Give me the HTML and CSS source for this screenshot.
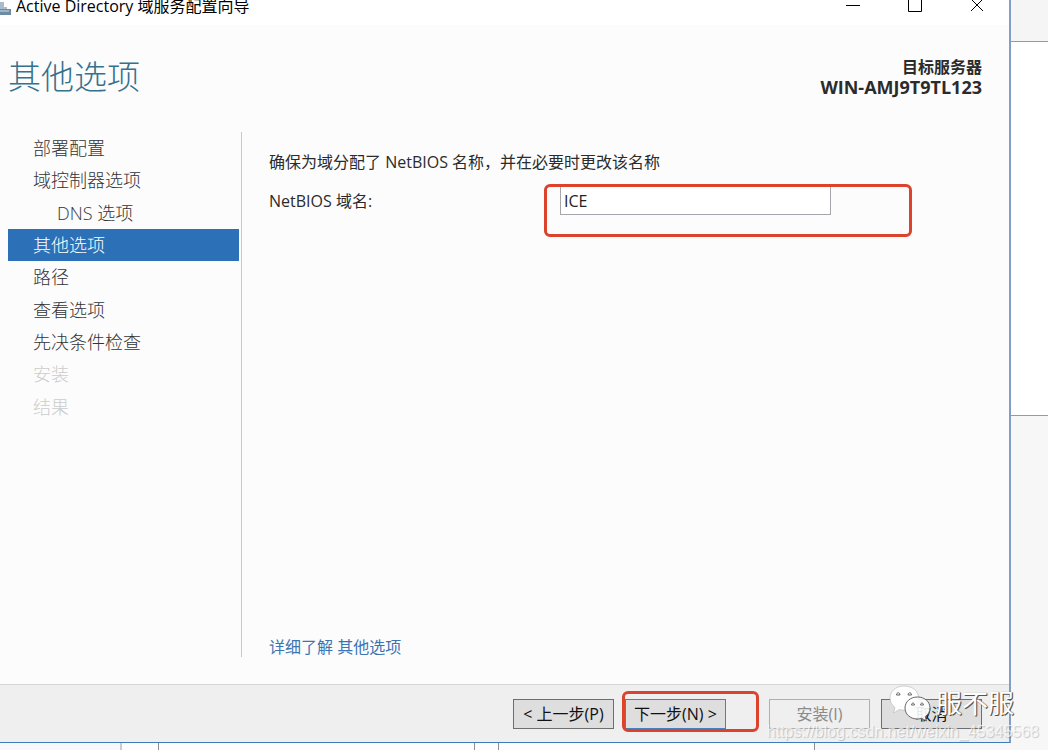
FILE: index.html
```html
<!DOCTYPE html>
<html lang="zh-CN">
<head>
    <meta charset="UTF-8">
    <meta name="viewport" content="width=device-width, initial-scale=1.0">
    <title>Active Directory 域服务配置向导</title>
    <link rel="stylesheet" href="styles.css">
</head>
<body>
    <div class="desktop">
        <main class="window">
            <header class="titlebar">
                <svg class="app-icon" width="12" height="18" viewBox="0 0 12 18">
                    <path d="M0 2h4v5h3v3H0z" fill="#a9bccb"/>
                    <path d="M0 9h11v6H0z" fill="#6d8ba3"/>
                    <path d="M0 11h9" stroke="#d5e0e8"/>
                </svg>
                <span class="title">Active Directory 域服务配置向导</span>
                <div class="controls">
                    <button class="control" aria-label="最小化"><svg width="16" height="16" viewBox="0 0 16 16"><path d="M1 8.500h14"/></svg></button>
                    <button class="control" aria-label="最大化"><svg width="16" height="16" viewBox="0 0 16 16"><path d="M1.500 1.500h13v13h-13z"/></svg></button>
                    <button class="control" aria-label="关闭"><svg width="16" height="16" viewBox="0 0 16 16"><path d="M2 2l12 12M14 2L2 14"/></svg></button>
                </div>
            </header>

            <div class="heading">
                <h1>其他选项</h1>
                <div class="server">目标服务器<br><span class="host">WIN-AMJ9T9TL123</span></div>
            </div>

            <div class="content">
                <nav class="sidebar">
                    <ul class="steps">
                        <li class="step">部署配置</li>
                        <li class="step">域控制器选项</li>
                        <li class="step step-sub">DNS 选项</li>
                        <li class="step step-active">其他选项</li>
                        <li class="step">路径</li>
                        <li class="step">查看选项</li>
                        <li class="step">先决条件检查</li>
                        <li class="step step-disabled">安装</li>
                        <li class="step step-disabled">结果</li>
                    </ul>
                </nav>
                <section class="panel">
                    <p class="hint">确保为域分配了 NetBIOS 名称，并在必要时更改该名称</p>
                    <div class="field">
                        <label for="netbios">NetBIOS 域名:</label>
                        <div class="field-box">
                            <input type="text" id="netbios" class="field-input" value="ICE">
                            <span class="mark mark-field"></span>
                        </div>
                    </div>
                    <a class="more" href="#">详细了解 其他选项</a>
                </section>
            </div>

            <footer class="footer">
                <button class="btn">&lt; 上一步(P)</button>
                <div class="next-box">
                    <button class="btn btn-primary">下一步(N) &gt;</button>
                    <span class="mark mark-next"></span>
                </div>
                <button class="btn btn-install" disabled>安装(I)</button>
                <button class="btn btn-cancel">取消</button>
            </footer>
        </main>

        <aside class="behind-right">
            <div class="behind-top"></div>
            <div class="behind-middle"></div>
        </aside>

        <div class="behind-bottom">
            <span class="cell cell-a"></span>
            <span class="cell cell-b"></span>
            <span class="cell cell-c"></span>
            <span class="cell cell-d"></span>
            <span class="cell cell-e"></span>
        </div>

        <div class="brand">
            <svg width="44" height="38" viewBox="0 0 44 38">
                <path d="M16 2C7.500 2 2 7.500 2 14c0 4 2 7.300 5 9.500L5.500 29l6-3.500c1.500.5 3 .7 4.500.7 9 0 14.500-5.500 14.500-12.200S25 2 16 2z" fill="#fff" stroke="#bbb" stroke-width=".7"/>
                <path d="M29.500 13C22 13 17 18 17 24s5 11 12.500 11c1.500 0 3-.2 4.200-.6L38.500 37l-1.300-4.400c3-2 4.800-5 4.800-8.600C42 18 37 13 29.500 13z" fill="#fff" fill-opacity=".9" stroke="#666"/>
                <g fill="#fff" stroke="#555" stroke-width=".9">
                    <path d="M8.500 11c0-3 3.500-3 3.500 0zM20 11c0-3 3.500-3 3.500 0z"/>
                    <path d="M23.500 21c0-2.600 3-2.600 3 0zM32.500 21c0-2.600 3-2.600 3 0z"/>
                </g>
            </svg>
            <span>服不服</span>
        </div>
        <div class="blog-url">https://blog.csdn.net/weixin_45345568</div>
    </div>
</body>
</html>
```

FILE: styles.css
```css
* {
    box-sizing: border-box;
}
body {
    margin: 0;
    font-family: "Open Sans", "Noto Sans CJK SC", sans-serif;
    font-size: 16px;
    line-height: 20px;
    color: #2b2b2b;
    background-color: #f7f7f7;
}
button, input {
    font: inherit;
}
.desktop {
    position: relative;
    display: grid;
    grid-template-columns: 1fr 37px;
    grid-template-rows: 1fr 7px;
    height: 100vh;
    overflow: hidden;
}
.window {
    display: flex;
    flex-direction: column;
    background-color: #fcfcfc;
    border-right: 2px solid #7f9fc6;
    border-bottom: 1px solid #3f79bd;
}

/* title bar */
.titlebar {
    display: flex;
    align-items: flex-start;
    height: 25px;
    background-color: #fff;
    color: #000;
}
.app-icon {
    margin-right: 4px;
}
.title {
    flex: 1;
    margin-top: -4px;
}
.controls {
    display: flex;
    gap: 46px;
    margin: -3px 24px 0 0;
}
.control {
    width: 16px;
    height: 16px;
    padding: 0;
    border: none;
    background: none;
}
.control svg {
    display: block;
    fill: none;
    stroke: #000;
    stroke-width: 1;
}

/* heading */
.heading {
    display: flex;
    justify-content: space-between;
    height: 107px;
    padding: 32px 27px 0 8px;
}
h1 {
    margin: 0;
    font-size: 33px;
    line-height: 40px;
    font-weight: 300;
    color: #34728f;
}
.server {
    font-weight: bold;
    text-align: right;
}
.host {
    font-size: 18px;
}

/* steps and panel */
.content {
    display: flex;
    flex: 1;
}
.sidebar {
    width: 242px;
    margin-bottom: 27px;
    padding: 0 2px 0 8px;
    border-right: 1px solid #c8c8c8;
}
.steps {
    display: flex;
    flex-direction: column;
    height: 291px;
    margin: 0;
    padding: 0;
    list-style: none;
    font-size: 18px;
    font-weight: 300;
    color: #333;
}
.step {
    display: flex;
    flex: 1;
    align-items: center;
    padding-left: 25px;
}
.step-sub {
    padding-left: 49px;
}
.step-active {
    background-color: #2c71b8;
    color: #fff;
}
.step-disabled {
    color: #ccc;
}
.panel {
    display: flex;
    flex: 1;
    flex-direction: column;
    align-items: flex-start;
    padding: 20px 27px 27px;
}
.hint {
    margin: 0 0 14px;
}
.field {
    display: flex;
    align-items: center;
}
.field label {
    width: 291px;
}
.field-box, .next-box {
    position: relative;
}
.field-input {
    display: block;
    width: 271px;
    height: 29px;
    padding: 0 3px;
    border: 1px solid #a5a7ac;
    border-radius: 0;
    background-color: #fff;
    color: #222;
}
.more {
    margin-top: auto;
    color: #3a74b4;
    text-decoration: none;
}

/* red marks drawn over the controls */
.mark {
    position: absolute;
    border: 3px solid #dc432c;
    border-radius: 6px;
    pointer-events: none;
}
.mark-field {
    top: -2px;
    left: -16px;
    width: 368px;
    height: 53px;
}
.mark-next {
    top: -8px;
    left: -3px;
    width: 137px;
    height: 41px;
}

/* buttons */
.footer {
    display: flex;
    justify-content: flex-end;
    align-items: flex-start;
    gap: 11px;
    height: 58px;
    padding: 14px 27px 0;
    border-top: 1px solid #d6d6d6;
    background-color: #efefef;
}
.btn {
    display: block;
    width: 101px;
    height: 30px;
    padding: 0;
    border: 1px solid #6e6e6e;
    border-radius: 0;
    background-color: #dedede;
    color: #111;
    white-space: nowrap;
}
.btn-primary {
    border-color: #4a7fc0;
}
.btn-install {
    margin-left: 32px;
    border-color: #b0b0b0;
    background-color: #efefef;
    color: #8a8a8a;
}

/* windows behind the wizard */
.behind-right {
    grid-row: span 2;
    background-color: #f7f7f7;
}
.behind-top {
    height: 41px;
    background-color: #f5f5f5;
}
.behind-middle {
    height: 375px;
    border-top: 1px solid #999;
    border-bottom: 1px solid #999;
    background-color: #fff;
}
.behind-bottom {
    display: flex;
}
.cell {
    border-right: 1px solid #8e8e8e;
    background-color: #fdfdfd;
}
.cell-a {
    width: 122px;
    border-right: 2px solid #ccc;
    background-color: #f8f8f8;
}
.cell-b {
    width: 37px;
}
.cell-c {
    width: 316px;
}
.cell-d {
    width: 24px;
}
.cell-e {
    width: 316px;
}

/* watermarks */
.brand {
    position: absolute;
    right: 34px;
    bottom: 28px;
    display: flex;
    align-items: center;
    gap: 4px;
    font-size: 26px;
    line-height: 36px;
    color: #fff;
    text-shadow: 1px 1px 0 #555, 1px 0 1px #777;
}
.blog-url {
    position: absolute;
    right: 9px;
    bottom: 8px;
    font-family: "Liberation Sans", Arial, sans-serif;
    font-size: 16px;
    color: rgba(255, 255, 255, 0.7);
    text-shadow: 1px 1px 1px rgba(0, 0, 0, 0.2);
}
```
